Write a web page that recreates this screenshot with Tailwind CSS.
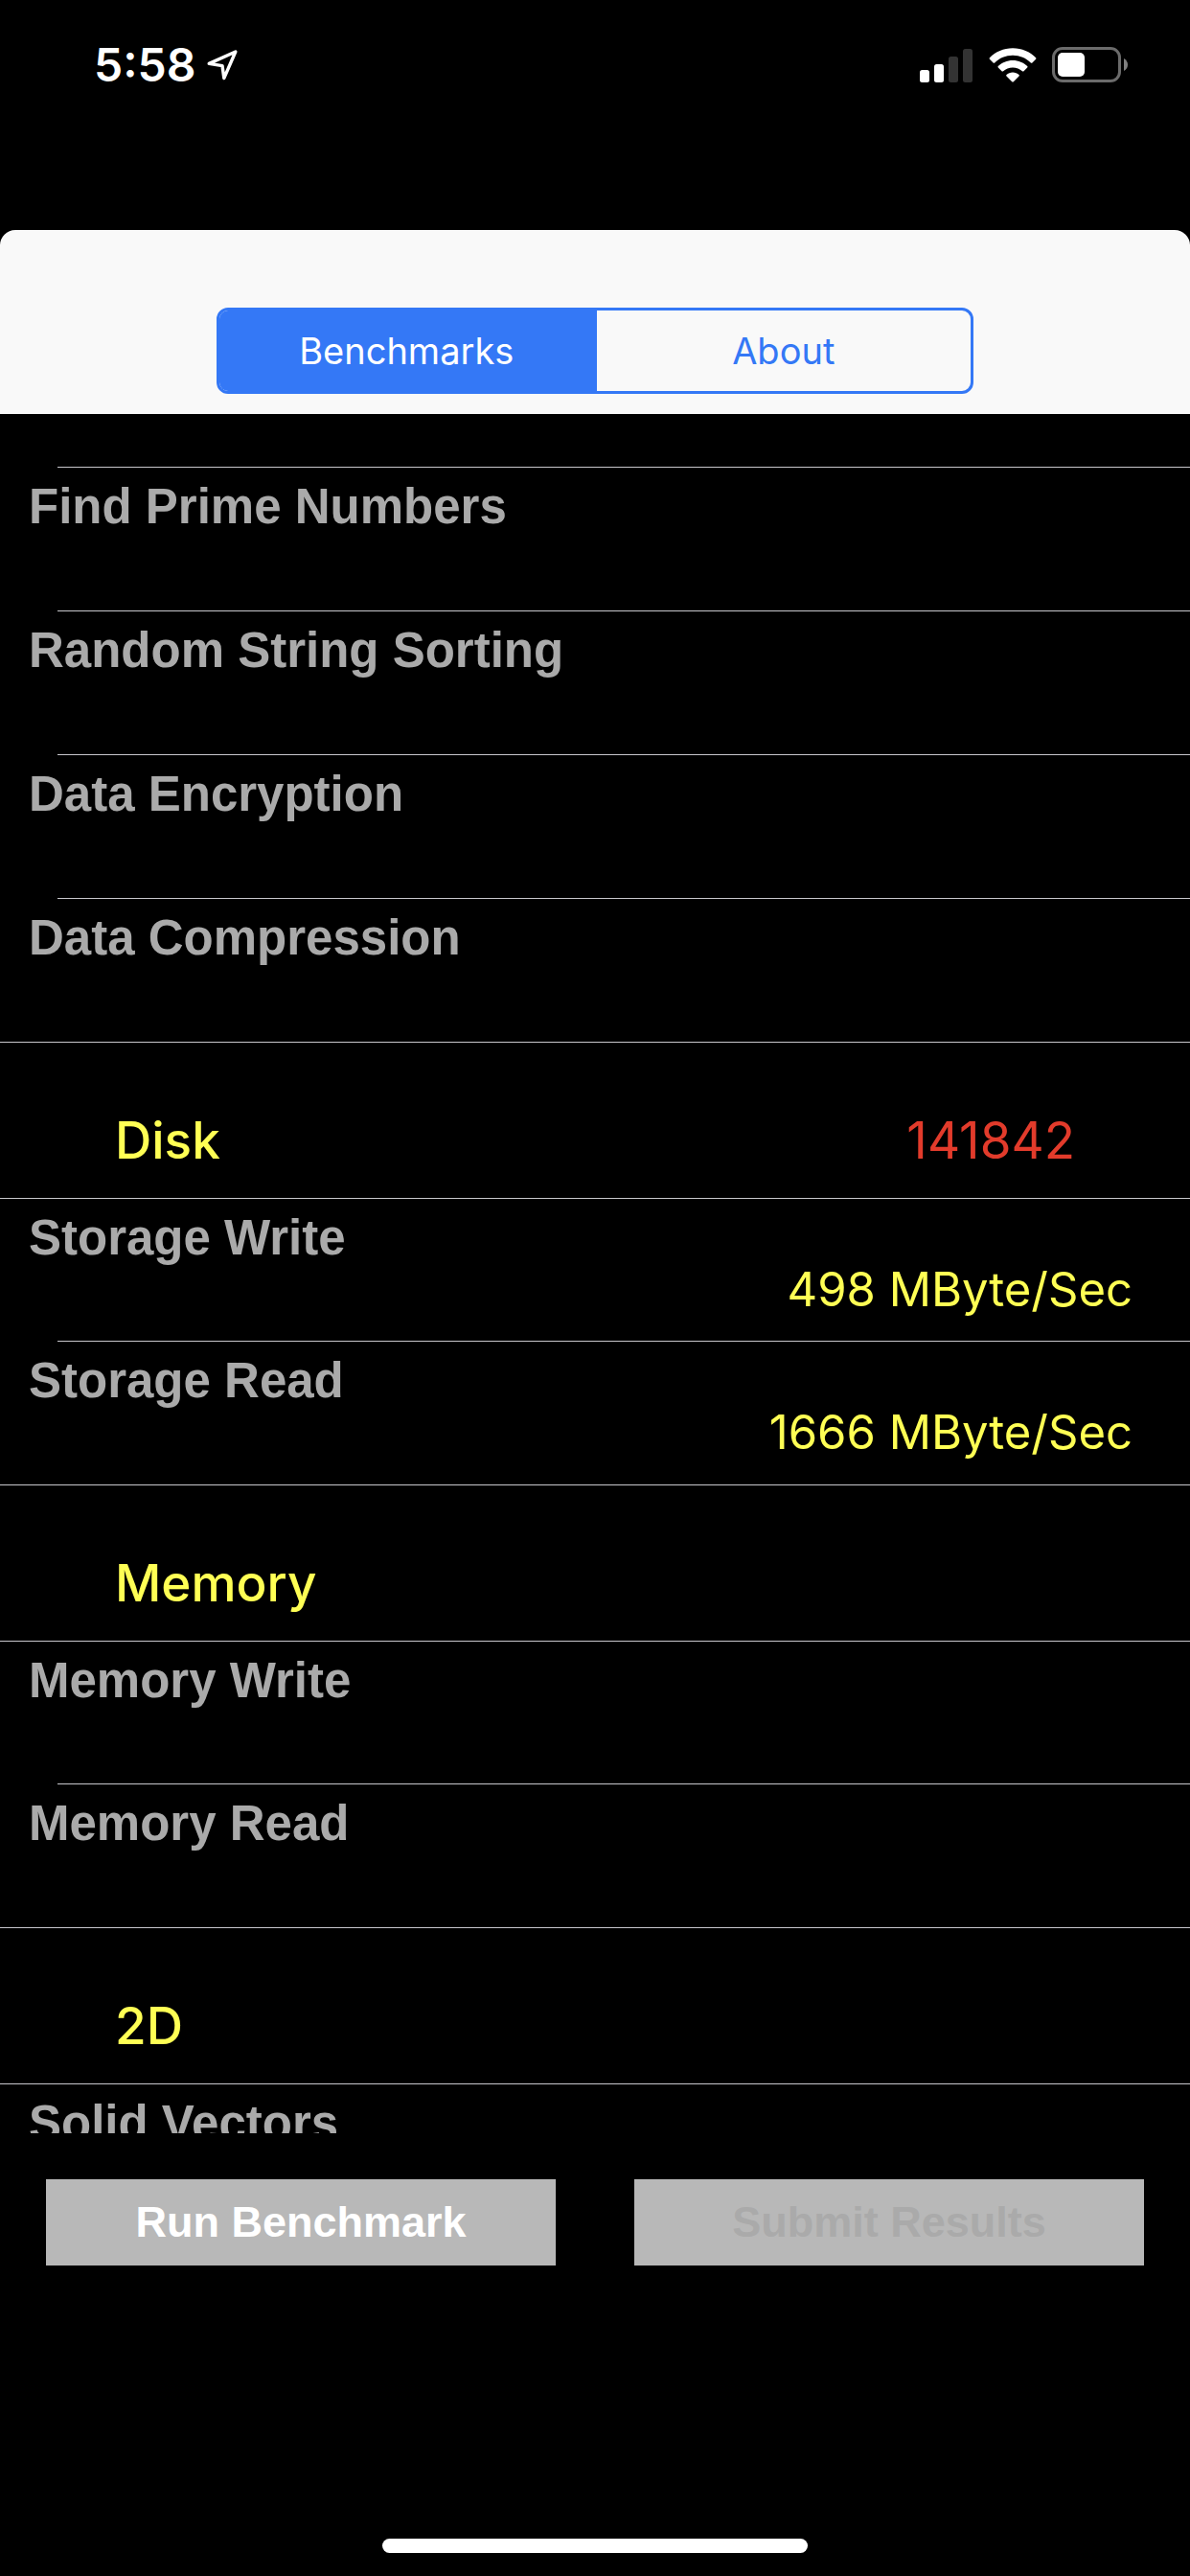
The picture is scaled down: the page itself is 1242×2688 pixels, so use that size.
<!DOCTYPE html>
<html lang="en" class="h-full">
<head>
  <meta charset="UTF-8">
  <meta name="viewport" content="width=device-width,initial-scale=1.0">
  <title>Benchmarks</title>
  <script src="https://cdn.jsdelivr.net/npm/@tailwindcss/browser@4"></script>
</head>
<body class="h-full bg-black flex flex-col overflow-hidden font-['Liberation_Sans',Arial,sans-serif]">
  <!-- Status bar -->
  <div class="shrink-0 h-60 px-16 pt-9 flex justify-between items-start text-white font-[Inter,sans-serif]">
    <div class="h-16 pl-[34px] flex items-center gap-3">
      <span class="text-[48px] leading-16 font-semibold">5:58</span>
      <svg class="w-8 h-8" viewBox="0 0 32 32" fill="none" stroke="currentColor" stroke-width="3.4" stroke-linejoin="round" aria-label="Location">
        <path d="M2.2 14.4 29.8 2 17.8 29.6 16 16.6Z"/>
      </svg>
    </div>
    <div class="h-16 flex items-center gap-4">
      <svg class="w-[56px] h-9" viewBox="0 0 56 36" fill="currentColor" aria-label="Signal">
        <rect x="0" y="23" width="10" height="13" rx="2.5"/>
        <rect x="15" y="17" width="10" height="19" rx="2.5"/>
        <rect x="30" y="9" width="10" height="27" rx="2.5" fill="#333"/>
        <rect x="45" y="1" width="10" height="35" rx="2.5" fill="#333"/>
      </svg>
      <svg class="w-[50px] h-9" viewBox="0 0 50 36" fill="currentColor" aria-label="Wi-Fi">
        <path d="M25 .2C34.6 .2 43 4 49.1 10.2Q49.9 11 49.1 11.8L45.4 15.4Q44.6 16.1 43.8 15.4C38.8 10.6 32.3 7.8 25 7.8S11.2 10.6 6.2 15.4Q5.4 16.1 4.6 15.4L.9 11.8Q.1 11 .9 10.2C7 4 15.4 .2 25 .2Z"/>
        <path d="M25 12.9C31 12.9 36.3 15.2 40.2 19Q41 19.8 40.2 20.6L36.5 24.2Q35.7 24.9 34.9 24.2C32.3 21.9 28.9 20.5 25 20.5S17.7 21.9 15.1 24.2Q14.3 24.9 13.5 24.2L9.8 20.6Q9 19.8 9.8 19C13.7 15.2 19 12.9 25 12.9Z"/>
        <path d="M25 25.5C27.5 25.5 29.8 26.4 31.5 27.9Q32.3 28.7 31.5 29.5L25.8 35.2Q25 36 24.2 35.2L18.5 29.5Q17.7 28.7 18.5 27.9C20.2 26.4 22.5 25.5 25 25.5Z"/>
      </svg>
      <svg class="w-20 h-[38px]" viewBox="0 0 80 38" fill="currentColor" aria-label="Battery">
        <rect x="1.5" y="1.5" width="69" height="34" rx="9.5" fill="none" stroke="#6b6b6b" stroke-width="3"/>
        <rect x="6" y="6" width="28" height="25" rx="5"/>
        <path d="M75 12Q79 14.5 79 18.5T75 25Z" fill="#808080"/>
      </svg>
    </div>
  </div>

  <!-- Tabs -->
  <header class="shrink-0 h-48 pb-[21px] flex justify-center items-end rounded-t-2xl bg-[#f9f9f9]">
    <nav class="w-[790px] max-w-full h-[90px] flex border-3 border-[#3478f6] rounded-xl overflow-hidden font-[Inter,sans-serif] text-[38px] leading-12">
      <button class="flex-1 border-r-3 border-[#3478f6] bg-[#3478f6] text-white" aria-pressed="true">Benchmarks</button>
      <button class="flex-1 text-[#3478f6]" aria-pressed="false">About</button>
    </nav>
  </header>

  <!-- Results, scrolled part way down -->
  <main class="grow min-h-0 pt-[55px] overflow-y-auto [scrollbar-width:none]">
    <section>
      <ul class="text-[51px] leading-15">
        <li class="h-[150px] before:block before:h-px before:mb-[11px] before:ml-15 before:bg-[#c8c7cc]">
          <div class="px-[30px] font-bold text-[#aaa]">Find Prime Numbers</div>
        </li>
        <li class="h-[150px] before:block before:h-px before:mb-[11px] before:ml-15 before:bg-[#c8c7cc]">
          <div class="px-[30px] font-bold text-[#aaa]">Random String Sorting</div>
        </li>
        <li class="h-[150px] before:block before:h-px before:mb-[11px] before:ml-15 before:bg-[#c8c7cc]">
          <div class="px-[30px] font-bold text-[#aaa]">Data Encryption</div>
        </li>
        <li class="h-[150px] before:block before:h-px before:mb-[11px] before:ml-15 before:bg-[#c8c7cc]">
          <div class="px-[30px] font-bold text-[#aaa]">Data Compression</div>
        </li>
      </ul>
    </section>

    <section>
      <div class="h-[163px] px-30 pt-[70px] flex justify-between border-t border-[#c8c7cc] font-[Inter,sans-serif] text-[53px] leading-16">
        <h2 class="font-medium text-[#ffff54]">Disk</h2>
        <span class="text-[#e23b2b]">141842</span>
      </div>
      <ul class="text-[51px] leading-15">
        <li class="h-[149px] before:block before:h-px before:mb-[11px] before:bg-[#c8c7cc]">
          <div class="px-[30px] font-bold text-[#aaa]">Storage Write</div>
          <div class="-mt-1.5 px-15 text-right font-[Inter,sans-serif] text-[49px] text-[#ffff54]">498 MByte/Sec</div>
        </li>
        <li class="h-[150px] before:block before:h-px before:mb-[11px] before:ml-15 before:bg-[#c8c7cc]">
          <div class="px-[30px] font-bold text-[#aaa]">Storage Read</div>
          <div class="-mt-1.5 px-15 text-right font-[Inter,sans-serif] text-[49px] text-[#ffff54]">1666 MByte/Sec</div>
        </li>
      </ul>
    </section>

    <section>
      <div class="h-[163px] px-30 pt-[70px] flex justify-between border-t border-[#c8c7cc] font-[Inter,sans-serif] text-[53px] leading-16">
        <h2 class="font-medium text-[#ffff54]">Memory</h2>
      </div>
      <ul class="text-[51px] leading-15">
        <li class="h-[149px] before:block before:h-px before:mb-[11px] before:bg-[#c8c7cc]">
          <div class="px-[30px] font-bold text-[#aaa]">Memory Write</div>
        </li>
        <li class="h-[150px] before:block before:h-px before:mb-[11px] before:ml-15 before:bg-[#c8c7cc]">
          <div class="px-[30px] font-bold text-[#aaa]">Memory Read</div>
        </li>
      </ul>
    </section>

    <section>
      <div class="h-[163px] px-30 pt-[70px] flex justify-between border-t border-[#c8c7cc] font-[Inter,sans-serif] text-[53px] leading-16">
        <h2 class="font-medium text-[#ffff54]">2D</h2>
      </div>
      <ul class="text-[51px] leading-15">
        <li class="h-[149px] before:block before:h-px before:mb-[11px] before:bg-[#c8c7cc]">
          <div class="px-[30px] font-bold text-[#aaa]">Solid Vectors</div>
        </li>
      </ul>
    </section>
  </main>

  <!-- Actions -->
  <footer class="shrink-0 px-12 pt-12 pb-6 flex flex-col items-center">
    <div class="w-full grid grid-cols-2 gap-[82px] text-[45px] leading-12 font-bold">
      <button class="h-[90px] bg-[#b8b8b8] text-white">Run Benchmark</button>
      <button class="h-[90px] bg-[#b8b8b8] text-[#aaa]" disabled>Submit Results</button>
    </div>
    <div class="mt-[285px] w-[444px] h-[15px] rounded-full bg-white"></div>
  </footer>
</body>
</html>
